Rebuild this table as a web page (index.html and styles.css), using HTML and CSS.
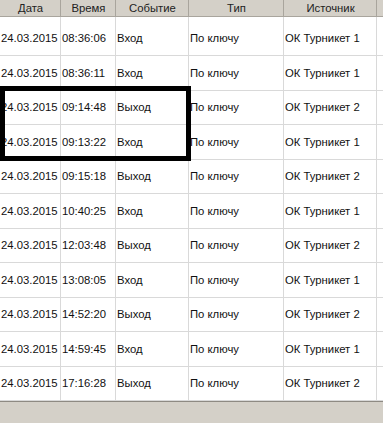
FILE: index.html
```html
<!DOCTYPE html>
<html lang="ru">
<head>
<meta charset="utf-8">
<link rel="stylesheet" href="styles.css">
</head>
<body>
<div class="view">
  <div class="grid">
    <div class="row head">
      <div class="c c1">Дата</div>
      <div class="c c2">Время</div>
      <div class="c c3">Событие</div>
      <div class="c c4">Тип</div>
      <div class="c c5">Источник</div>
    </div>
    <div class="row first"><div class="c c1">24.03.2015</div><div class="c c2">08:36:06</div><div class="c c3">Вход</div><div class="c c4">По ключу</div><div class="c c5">ОК Турникет 1</div></div>
    <div class="row"><div class="c c1">24.03.2015</div><div class="c c2">08:36:11</div><div class="c c3">Вход</div><div class="c c4">По ключу</div><div class="c c5">ОК Турникет 1</div></div>
    <div class="row"><div class="c c1">24.03.2015</div><div class="c c2">09:14:48</div><div class="c c3">Выход</div><div class="c c4">По ключу</div><div class="c c5">ОК Турникет 2</div></div>
    <div class="row"><div class="c c1">24.03.2015</div><div class="c c2">09:13:22</div><div class="c c3">Вход</div><div class="c c4">По ключу</div><div class="c c5">ОК Турникет 1</div></div>
    <div class="row"><div class="c c1">24.03.2015</div><div class="c c2">09:15:18</div><div class="c c3">Выход</div><div class="c c4">По ключу</div><div class="c c5">ОК Турникет 2</div></div>
    <div class="row"><div class="c c1">24.03.2015</div><div class="c c2">10:40:25</div><div class="c c3">Вход</div><div class="c c4">По ключу</div><div class="c c5">ОК Турникет 1</div></div>
    <div class="row"><div class="c c1">24.03.2015</div><div class="c c2">12:03:48</div><div class="c c3">Выход</div><div class="c c4">По ключу</div><div class="c c5">ОК Турникет 2</div></div>
    <div class="row"><div class="c c1">24.03.2015</div><div class="c c2">13:08:05</div><div class="c c3">Вход</div><div class="c c4">По ключу</div><div class="c c5">ОК Турникет 1</div></div>
    <div class="row"><div class="c c1">24.03.2015</div><div class="c c2">14:52:20</div><div class="c c3">Выход</div><div class="c c4">По ключу</div><div class="c c5">ОК Турникет 2</div></div>
    <div class="row"><div class="c c1">24.03.2015</div><div class="c c2">14:59:45</div><div class="c c3">Вход</div><div class="c c4">По ключу</div><div class="c c5">ОК Турникет 1</div></div>
    <div class="row"><div class="c c1">24.03.2015</div><div class="c c2">17:16:28</div><div class="c c3">Выход</div><div class="c c4">По ключу</div><div class="c c5">ОК Турникет 2</div></div>
  </div>
  <div class="highlight"></div>
  <div class="footer"></div>
</div>
</body>
</html>
```

FILE: styles.css
```css
html, body {
  margin: 0;
  padding: 0;
  background: #ffffff;
}
body {
  font-family: "Liberation Sans", Arial, sans-serif;
  font-size: 11.3px;
  color: #111;
}
.view {
  position: relative;
  width: 383px;
  height: 423px;
  display: flex;
  flex-direction: column;
  overflow: hidden;
}
.grid {
  flex: 1;
  display: flex;
  flex-direction: column;
}
.row {
  display: grid;
  grid-template-columns: 61px 55px 73px 95px 93px;
  height: 34.5px;
  border-bottom: 1px solid #d9d9d9;
  box-sizing: border-box;
  flex: none;
}
.row.first {
  height: 39px;
}
.row.first .c {
  padding-top: 4px;
}
.row.head {
  height: 17px;
  background: #d4d0c8;
  border-bottom: 1px solid #a9a59d;
  color: #222;
}
.c {
  display: flex;
  align-items: center;
  padding-left: 1px;
  border-right: 1px solid #d9d9d9;
  white-space: nowrap;
  overflow: hidden;
}
.head .c {
  justify-content: center;
  padding-left: 0;
  border-right: none;
  box-shadow: inset -1px 0 0 #a9a59d;
}
.c1 { padding-left: 1px; }
.highlight {
  position: absolute;
  left: 0;
  top: 86px;
  width: 191px;
  height: 75px;
  border: 5px solid #000;
  box-sizing: border-box;
  pointer-events: none;
}
.footer {
  height: 21px;
  background: #d4d0c8;
  border-top: 1px solid #8e8a83;
}
```
